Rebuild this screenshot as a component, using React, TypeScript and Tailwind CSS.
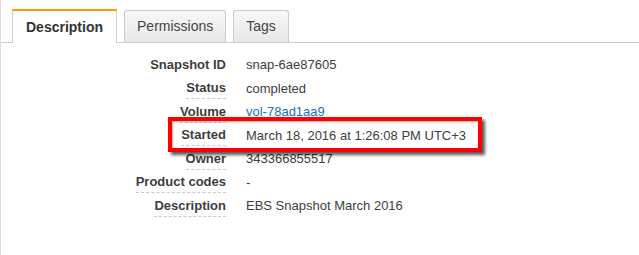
const rows: { label: string; value: string; help: boolean; link?: boolean }[] = [
  { label: 'Snapshot ID', value: 'snap-6ae87605', help: false },
  { label: 'Status', value: 'completed', help: true },
  { label: 'Volume', value: 'vol-78ad1aa9', help: true, link: true },
  { label: 'Started', value: 'March 18, 2016 at 1:26:08 PM UTC+3', help: true },
  { label: 'Owner', value: '343366855517', help: true },
  { label: 'Product codes', value: '-', help: true },
  { label: 'Description', value: 'EBS Snapshot March 2016', help: true },
];

function Tab({ label, active }: { label: string; active?: boolean }) {
  if (active) {
    return (
      <div className="h-[34px] -mb-px flex items-center px-[13px] bg-white border-t-2 border-t-[#ff9900] border-x border-x-[#cccccc] text-[14px] font-bold text-[#333]">
        {label}
      </div>
    );
  }
  return (
    <div className="h-[32px] flex items-center px-[12px] rounded-t-[3px] border border-b-0 border-[#cccccc] bg-gradient-to-b from-[#f7f7f7] to-[#e8e8e8] text-[14px] text-[#444]">
      {label}
    </div>
  );
}

export default function App() {
  return (
    <div
      className="relative w-[639px] h-[255px] bg-white border-l border-[#dddddd] overflow-hidden"
      style={{ fontFamily: '"Liberation Sans", Arial, sans-serif' }}
    >
      <div className="flex items-end gap-[7px] h-[43px] pl-[11px] border-b border-[#cccccc]">
        <Tab label="Description" active />
        <Tab label="Permissions" />
        <Tab label="Tags" />
      </div>

      <div className="pt-[10px] grid grid-cols-[225px_1fr] gap-x-[20px] text-[13px] leading-[15px] text-[#3d3d3d]">
        {rows.map((r) => (
          <div key={r.label} className="contents">
            <div className="h-[23.5px] flex items-center justify-end">
              <span
                className={`font-bold pb-[3px] mt-[3px] ${
                  r.help ? 'border-b border-dashed border-[#c8c8c8]' : 'border-b border-transparent'
                }`}
              >
                {r.label}
              </span>
            </div>
            <div className="h-[23.5px] flex items-center">
              <span className={r.link ? 'text-[#1a6fc1]' : ''}>{r.value}</span>
            </div>
          </div>
        ))}
      </div>

      {/* annotation box drawn over the Started row */}
      <div className="absolute left-[167px] top-[117px] w-[314px] h-[35px] border-4 border-[#ff0000] shadow-[3px_3px_3px_rgba(0,0,0,0.65),inset_1px_1px_2px_rgba(0,0,0,0.35)]" />
    </div>
  );
}
